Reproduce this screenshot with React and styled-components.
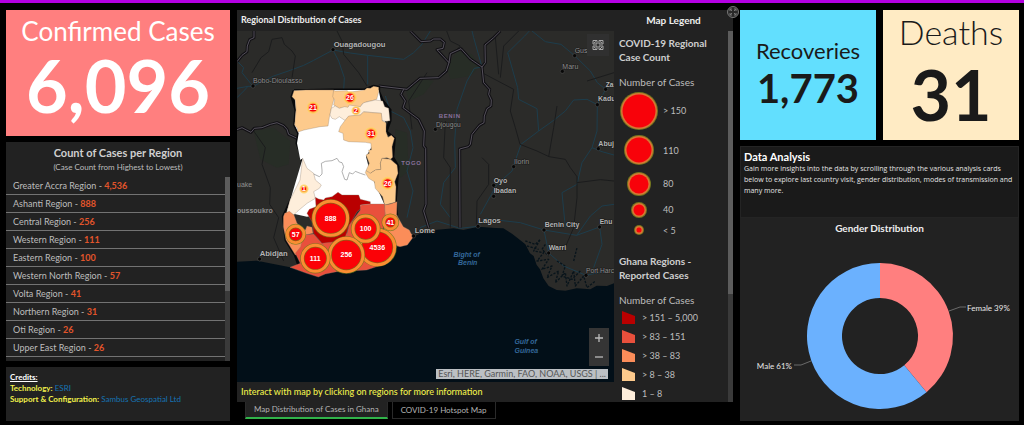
import React from "react";
import styled, { createGlobalStyle } from "styled-components";

const GlobalStyle = createGlobalStyle`
  * { box-sizing: border-box; }
  body { margin: 0; background: #000; color: #bdbdbd; font-family: Lato, "Open Sans", sans-serif; font-size: 10px; }
  h1, h2, h3, p, ul, dl, dd { margin: 0; padding: 0; }
  button { font: inherit; color: inherit; padding: 0; }
`;

const Page = styled.div`
  min-height: 100vh;
  display: flex;
  flex-direction: column;
  border-top: 3px solid #b400e2;
`;

const Dashboard = styled.main`
  flex: 1;
  display: grid;
  grid-template-columns: minmax(0, 224fr) minmax(0, 496fr) minmax(0, 279fr);
  gap: 7px;
  padding: 7px 5px 4px 6px;
`;

const Column = styled.div`
  display: flex;
  flex-direction: column;
  gap: ${(p) => p.$gap || 0}px;
`;

const StatCard = styled.section`
  min-height: ${(p) => p.$height}px;
  flex: ${(p) => (p.$share ? "1" : "none")};
  display: flex;
  flex-direction: column;
  align-items: center;
  padding-top: ${(p) => p.$top}px;
  background: ${(p) => p.$bg};
  color: ${(p) => p.$color};
`;

const StatName = styled.h2`
  font-size: ${(p) => p.$size}px;
  line-height: ${(p) => p.$line}px;
  font-weight: ${(p) => p.$weight || 400};
`;

const StatValue = styled.p`
  font-size: ${(p) => p.$size}px;
  line-height: ${(p) => p.$line}px;
  font-weight: 700;
`;

const StatPair = styled.div`
  display: flex;
  gap: 7px;
`;

const Panel = styled.section`
  background: #222;
  flex: 1;
  display: flex;
  flex-direction: column;
  min-height: 0;
`;

const ListHeading = styled.header`
  text-align: center;
  height: 35px;
  padding-top: 4px;
`;

const ListTitle = styled.h2`
  font-size: 11px;
  line-height: 14px;
  color: #cfcfcf;
`;

const ListNote = styled.p`
  font-size: 8px;
  line-height: 14px;
`;

const ScrollArea = styled.div`
  flex: 1;
  display: flex;
  min-height: 0;
`;

const ScrollTrack = styled.div`
  width: 5px;
  flex: none;
  background: #3a3a3a;
`;

const ScrollThumb = styled.div`
  height: ${(p) => p.$size}%;
  background: #5c5c5c;
`;

const RegionList = styled.ul`
  flex: 1;
  list-style: none;
`;

const RegionRow = styled.li`
  height: 18px;
  padding-left: 7px;
  line-height: 17px;
  border-bottom: 1px solid #737373;
  font-size: 9px;
  strong { color: #e2552b; }
`;

const Credits = styled.section`
  height: 54px;
  padding: 5px 4px;
  background: #222;
  font-size: 8px;
  line-height: 11px;
  color: #f1f14b;
  h2 { font-size: 8px; line-height: 11px; color: #fff; text-decoration: underline; }
  a { color: #1673b3; text-decoration: none; }
`;

const MapPanel = styled.section`
  position: relative;
  background: #222;
  display: grid;
  grid-template-columns: minmax(0, 377fr) minmax(0, 119fr);
  grid-template-rows: 21px auto;
`;

const PanelTitle = styled.h2`
  font-size: ${(p) => p.$size}px;
  line-height: 20px;
  font-weight: 700;
  padding: 0 4px;
  text-align: ${(p) => p.$align || "left"};
  color: #eee;
`;

const ExpandButton = styled.button`
  position: absolute;
  top: -4px;
  right: -6px;
  width: 12px;
  height: 12px;
  border: 0;
  background: none;
  svg { display: block; }
`;

const MapFrame = styled.div`
  position: relative;
  overflow: hidden;
  > svg { display: block; width: 100%; height: auto; }
`;

const MapTool = styled.button`
  position: absolute;
  top: 3px;
  right: 5px;
  width: 22px;
  height: 22px;
  border: 0;
  background: #303030;
  display: grid;
  place-items: center;
`;

const ZoomControl = styled.div`
  position: absolute;
  right: 5px;
  bottom: 16px;
  width: 20px;
  display: flex;
  flex-direction: column;
  background: #353535;
`;

const ZoomButton = styled.button`
  height: 19px;
  border: 0;
  background: none;
  display: grid;
  place-items: center;
`;

const Attribution = styled.p`
  position: absolute;
  right: 6px;
  bottom: 3px;
  height: 10px;
  padding: 0 2px;
  font-size: 9px;
  line-height: 10px;
  white-space: nowrap;
  background: #bcc0c4;
  color: #555;
`;

const Caption = styled.p`
  height: 20px;
  padding-left: 4px;
  line-height: 20px;
  font-size: 9px;
  font-weight: 500;
  color: #f0f04c;
`;

const LegendColumn = styled.aside`
  display: flex;
  height: 0;
  min-height: 100%;
  overflow: hidden;
`;

const LegendBody = styled.div`
  flex: 1;
  padding: 5px 0 0 5px;
`;

const LegendTitle = styled.h3`
  font-size: 10px;
  line-height: 14px;
  color: #cfcfcf;
  margin-bottom: 11px;
`;

const LegendSubtitle = styled.p`
  font-size: 10px;
  line-height: 14px;
  margin-bottom: 1px;
`;

const LegendList = styled.ul`
  list-style: none;
  margin-bottom: ${(p) => p.$after || 0}px;
`;

const LegendItem = styled.li`
  display: grid;
  grid-template-columns: ${(p) => p.$col}px 1fr;
  column-gap: ${(p) => p.$gap}px;
  align-items: center;
  height: ${(p) => p.$height}px;
  padding-left: ${(p) => p.$indent || 0}px;
  font-size: 9px;
  svg { display: block; margin: auto; }
`;

const TabBar = styled.div`
  display: flex;
  gap: 4px;
  padding-left: 8px;
`;

const Tab = styled.button`
  height: 17px;
  padding: 0 8px;
  font-size: 8px;
  line-height: 15px;
  color: #b4b4b4;
  border: 1px solid #2a2a2a;
  border-top: 0;
  border-bottom: ${(p) => (p.$active ? "2px solid #31b34a" : "1px solid #2a2a2a")};
  background: ${(p) => (p.$active ? "#222" : "#000")};
`;

const AnalysisGroup = styled.div`
  flex: 1;
  display: flex;
  flex-direction: column;
  margin-top: 6px;
`;

const Analysis = styled.section`
  min-height: 72px;
  padding: 4px 0 0 3px;
  background: #1a1a1a;
  color: #e4e4e4;
  border: 1px solid #242424;
  h2 { font-size: 11px; line-height: 12px; color: #fff; }
  p { font-family: "Open Sans", sans-serif; font-size: 7px; line-height: 11px; }
`;

const ChartTitle = styled.h2`
  text-align: center;
  font-size: 10px;
  line-height: 20px;
  color: #eee;
`;

const ChartArea = styled.div`
  flex: 1;
  svg { display: block; width: 100%; height: auto; }
`;

const regions = [
  ["Greater Accra Region", "4,536"],
  ["Ashanti Region", "888"],
  ["Central Region", "256"],
  ["Western Region", "111"],
  ["Eastern Region", "100"],
  ["Western North Region", "57"],
  ["Volta Region", "41"],
  ["Northern Region", "31"],
  ["Oti Region", "26"],
  ["Upper East Region", "26"],
];

// Circle legend: [label, radius, row height]
const bubbleLegend = [
  ["> 150", 19, 41],
  ["110", 15, 38],
  ["80", 12, 29],
  ["40", 8, 23],
  ["< 5", 5, 18],
];

const shadeLegend = [
  ["> 151 – 5,000", "#b90000"],
  ["> 83 – 151", "#e9503c"],
  ["> 38 – 83", "#fb8d59"],
  ["> 8 – 38", "#fdca8c"],
  ["1 – 8", "#feeedb"],
];

// Region shapes of Ghana: [fill, points]
const shapes = [
  ["#fff", "186,272 300,270 440,270 460,370 402,470 415,520 458,615 385,620 225,650 164,637 212,475 205,480 195,430 200,400 188,375 192,330"],
  ["#fdca8c", "186,272 222,270 305,270 308,290 298,325 292,352 288,378 264,380 240,385 216,390 198,396 196,385 188,375 192,330 190,300 180,290"],
  ["#fdca8c", "305,270 308,273 346,272 350,277 398,270 405,264 415,265 425,259 440,262 440,275 434,298 420,302 405,305 390,312 385,322 352,318 345,330 338,322 322,325 305,315 308,300 302,290"],
  ["#feeedb", "298,325 310,318 322,325 338,320 348,322 352,315 385,320 395,308 430,300 452,303 458,320 470,325 474,362 462,364 450,362 448,340 395,335 385,345 350,350 340,362 322,350 310,358 300,355 294,345"],
  ["#fdca8c", "340,360 350,348 385,345 395,336 448,340 450,362 462,368 462,395 468,412 478,406 487,415 480,440 482,472 475,478 465,473 450,475 445,490 447,508 430,510 415,520 402,512 412,490 402,465 412,460 410,450 418,450 417,430 400,427 350,425 335,420 333,400 320,395 325,380"],
  ["#fdca8c", "400,518 402,512 415,520 430,510 447,508 445,490 450,475 475,478 495,495 498,520 488,545 492,560 490,607 458,615 452,590 430,565 427,545 410,535"],
  ["#feeedb", "212,475 225,505 245,520 250,540 268,555 262,565 245,575 250,595 225,610 195,635 185,645 164,637 174,600 189,570 204,540"],
  ["#fb8d59", "154,650 158,640 172,634 186,645 195,670 220,690 225,678 240,682 243,700 220,705 208,750 190,765 162,720 154,680"],
  ["#e9503c", "213,705 245,702 275,735 314,815 280,822 259,831 224,820 174,802 205,790 190,760 206,740"],
  ["#e9503c", "345,700 489,735 464,790 404,810 314,815 270,730"],
  ["#b90000", "250,592 260,597 275,600 280,594 300,590 318,577 330,585 380,585 385,598 415,605 415,612 385,615 388,625 375,635 350,680 340,710 310,725 270,730 245,700 240,665 225,640 232,628 252,620"],
  ["#e9503c", "385,616 415,612 458,612 460,640 455,680 440,720 400,740 360,740 345,700 352,675 385,630"],
  ["#fb8d59", "458,615 475,612 495,605 494,645 514,680 532,690 538,702 546,708 526,735 504,740 489,735 455,690 460,650"],
];

// Case bubbles: [x, y, radius, label]
const bubbles = [
  [243, 323, 15, "21"],
  [354, 293, 16, "26"],
  [372, 332, 10, "2"],
  [417, 401, 16, "31"],
  [467, 550, 16, "26"],
  [216, 567, 10, "1"],
  [436, 742, 52, "4536"],
  [296, 655, 51, "888"],
  [401, 686, 38, "100"],
  [343, 765, 50, "256"],
  [250, 775, 39, "111"],
  [191, 703, 25, "57"],
  [475, 667, 20, "41"],
];

// Cities: [x, y, name, dx, dy, weight, size]
const cities = [
  [288, 56, "Ouagadougou", 2, -9, 700, 23],
  [48, 165, "Bobo-Dioulasso", 0, -8, 400, 21],
  [595, 295, "Djougou", 2, -6, 400, 20],
  [1013, 74, "Gus", 0, -8, 400, 21],
  [976, 121, "Maru", 0, -8, 400, 21],
  [1106, 175, "Za", 0, -8, 700, 20],
  [1081, 221, "Kadu", 2, -10, 700, 21],
  [1084, 353, "Abuj", 0, -8, 700, 21],
  [830, 407, "Ilorin", 1, -8, 400, 21],
  [770, 463, "Oyo", 0, -8, 700, 21],
  [770, 496, "Ibadan", 0, -9, 700, 21],
  [723, 586, "Lagos", 1, -9, 700, 23],
  [921, 597, "Benin City", 2, -9, 700, 21],
  [935, 666, "Warri", 0, -8, 700, 21],
  [1088, 588, "Enu", 0, -8, 700, 20],
  [1047, 733, "Port Harc", 0, -8, 400, 20],
  [68, 684, "Abidjan", 0, -9, 700, 23],
  [530, 615, "Lome", 3, -8, 700, 23],
];

const borders = [
  "M51 0 V20 L38 26 31 45 30 62 15 73 0 92",
  "M0 296 15 290 30 298 42 304 52 292 75 290 100 280 120 275 140 284 150 295 155 310 172 318 185 325",
  "M520 0 L552 32 580 30 590 24 610 24 622 34 618 52 600 56 636 95 628 120 605 140 549 142 530 158 510 175 450 168 425 165",
  "M636 95 640 68 672 53 700 84 735 108 745 95 744 42 770 20 790 0",
  "M735 108 740 155 758 175 755 190 763 207 762 225 750 233 742 255 741 275 727 283 705 310 700 340 694 347 668 354 669 590",
  "M500 175 492 190 505 210 498 230 518 245 545 265 562 300 560 345 566 352 567 520 560 540 575 590",
];

const thinBorders = [
  "M45 125 72 80 95 62 105 25 135 20 142 40 165 60 175 75 165 140",
  "M300 0 315 30 320 70 365 125 390 165",
  "M50 300 85 350 75 400 100 470 98 520 125 560 110 620 140 690",
  "M629 0 640 30 670 45 655 60 M525 295 515 210 570 125",
  "M735 125 830 175 820 240 835 290 849 340 900 360 936 377 985 385 1000 410 1020 437 1020 500 1010 590 980 660",
  "M960 225 950 290 935 377 M1131 125 1050 150 M845 0 800 45 790 140 M1131 450 1090 446 1020 455",
  "M735 380 755 400 755 460 720 510 718 585 M625 270 620 380 640 410 640 590 M775 20 785 130",
];

const rivers = [
  "M0 172 33 166 48 166 110 135 160 118 200 103 230 88 288 57 305 90 322 140 320 178",
  "M0 90 20 110 15 125 48 166 M0 200 20 180 33 166",
  "M288 57 340 66 392 73 392 160 M392 73 500 85 530 65 555 40 580 0",
  "M705 0 710 20 735 108 712 112 690 150 660 235 653 330 655 410 620 455 610 520 640 560",
  "M877 0 863 15 812 65 842 170 845 205 900 233 905 300 852 340 837 383 825 420 780 460 730 550",
  "M885 0 925 32 972 40 1013 74 1060 120 1081 155 1106 175 1131 160 M1081 221 1050 205 1010 207 985 240 950 268 905 300",
  "M1106 175 1081 221 1080 300 1065 350 1035 395 1020 460 975 485 985 590",
  "M445 195 460 240 500 260 520 300 528 350 510 420 528 480 510 560",
  "M723 586 745 563 850 575 921 597 1019 613 1088 588 1095 640 1070 710 M921 597 935 666 980 705 1047 733 1131 715",
  "M1065 350 1095 362 1131 372 M1019 613 1060 555 1095 525 1131 520 M549 590 600 570 669 592 723 586",
];

function RegionalMap() {
  return (
    <svg viewBox="0 0 1131 1053" role="img" aria-label="Map of cases by region in Ghana" fontFamily="'Liberation Sans', Arial, sans-serif">
      <rect width="1131" height="1053" fill="#020f18" />
      <path
        fill="#2b2b29"
        d="M0 0H1131V757L1110 765 1079 764 1060 775 1019 772 985 779 959 777 935 765 919 742 909 715 899 702 890 675 879 667 865 640 849 627 825 608 799 592 775 591 724 587 679 597 650 592 594 597 560 602 530 617 510 640 474 650 240 720 175 712 125 702 60 689 0 692Z"
      />
      <g fill="#272d26">
        <path d="M665 60 705 70 730 105 700 135 640 145 630 110 650 75Z" />
        <path d="M50 300 110 290 160 330 155 400 120 410 70 385Z" />
        <path d="M505 170 560 145 590 150 560 190 515 210Z" />
        <path d="M475 295 510 305 515 420 490 440 475 380Z" />
      </g>
      <g fill="none" strokeLinejoin="round">
        <g stroke="#1d3d4c" strokeWidth="3">
          {rivers.map((d) => <path key={d} d={d} />)}
        </g>
        <g stroke="#1b1c1d" strokeWidth="3">
          {thinBorders.map((d) => <path key={d} d={d} />)}
        </g>
        <g stroke="#111014" strokeWidth="9">
          {borders.map((d) => <path key={d} d={d} />)}
        </g>
        <g stroke="#77717f" strokeWidth="2">
          {borders.map((d) => <path key={d} d={d} />)}
        </g>
        <path
          d="M865 630 895 640 910 625 890 660 920 665 900 690 935 685 915 715 945 705 930 740 965 720 955 755 985 725 990 765 1010 720 1015 765 1040 735 1050 770 1075 750 M960 690 985 705 975 735 1005 745 1030 720 M925 640 915 655 935 675 M1010 690 1020 650 M870 645 905 655"
          stroke="#08141b"
          strokeWidth="4"
          strokeDasharray="7 4"
        />
      </g>
      <g transform="translate(-15 -93)">
        <path
          d="M186 272 300 270 398 270 425 259 440 262 440 275 452 303 474 330 474 362 462 395 487 415 482 472 498 500 490 600 494 645"
          fill="none"
          stroke="#08090b"
          strokeWidth="9"
        />
        <path d="M186 272 180 290 192 330 188 375 200 400 195 430 212 475 204 540 154 650 162 720 190 765 200 795" fill="none" stroke="#08090b" strokeWidth="9" />
        {shapes.map(([fill, points]) => (
          <polygon key={points} points={points} fill={fill} stroke="#8c7a66" strokeWidth={fill === "#fff" ? 0 : 1} />
        ))}
        <path
          d="M245 522 262 530 270 522 270 510 268 490 280 484 300 482 315 475 322 486 330 488 335 500 330 515 338 538 345 540 352 518 362 522 370 514 385 520 400 525"
          fill="none"
          stroke="#8a8a8a"
          strokeWidth="2"
        />
        {bubbles.map(([x, y, r, label]) => (
          <g key={`${x}-${y}`}>
            <circle cx={x} cy={y} r={r} fill="#fb0207" stroke={r > 16 ? "#6e7c1b" : "#ffd35a"} strokeWidth={r > 16 ? 13 : 7} strokeOpacity="0.8" />
            {r > 16 && <circle cx={x} cy={y} r={r} fill="none" stroke="#fb8d32" strokeWidth="9" />}
            <text x={x} y={y + 7} textAnchor="middle" fontSize="21" fontWeight="700" fill="#fff">{label}</text>
          </g>
        ))}
      </g>
      {cities.map(([x, y, name, dx, dy, weight, size]) => (
        <g key={name}>
          <circle cx={x} cy={y} r="6" fill="#070707" stroke="#6d6d6d" strokeWidth="1" />
          <text x={x + dx} y={y + dy} fontSize={size} fontWeight={weight} fill={weight === 700 ? "#b4b4b4" : "#8f8f8f"} stroke="#1b1b1b" strokeWidth="3" paintOrder="stroke">
            {name}
          </text>
        </g>
      ))}
      <g fontSize="21" fill="#8f8f8f">
        <text x="0" y="467">uake</text>
        <text x="0" y="545" fontWeight="700">oussoukro</text>
      </g>
      <g fontSize="18" fontWeight="700" fill="#88719a" letterSpacing="2">
        <text x="493" y="401">TOGO</text>
        <text x="605" y="260">BENIN</text>
      </g>
      <g fontSize="21" fontWeight="700" fontStyle="italic" fill="#34689a" textAnchor="middle">
        <text x="689" y="678">Bight of</text>
        <text x="692" y="701">Benin</text>
        <text x="866" y="939">Gulf of</text>
        <text x="868" y="965">Guinea</text>
      </g>
    </svg>
  );
}

function polar(angle, radius) {
  const a = (angle * Math.PI) / 180;
  return `${140 + radius * Math.sin(a)} ${98 - radius * Math.cos(a)}`;
}

function slice(from, to) {
  const large = to - from > 180 ? 1 : 0;
  return `M${polar(from, 73)}A73 73 0 ${large} 1 ${polar(to, 73)}L${polar(to, 38)}A38 38 0 ${large} 0 ${polar(from, 38)}Z`;
}

function GenderChart() {
  const split = 360 * 0.39;
  return (
    <svg viewBox="0 0 279 183" role="img" aria-label="Female 39%, Male 61%">
      <path d={slice(0, split)} fill="#ff7f7f" />
      <path d={slice(split, 360)} fill="#6bb1fe" />
      <g fill="none" stroke="#6a6a6a" strokeWidth="1">
        <path d="M209 73 220 69H226" />
        <path d="M71 123 61 127H54" />
      </g>
      <g fill="#e6e6e6" fontSize="8">
        <text x="227" y="73">Female 39%</text>
        <text x="52" y="131" textAnchor="end">Male 61%</text>
      </g>
    </svg>
  );
}

function Bubble({ radius }) {
  const side = radius * 2 + 2;
  return (
    <svg width={side} height={side} viewBox={`${-side / 2} ${-side / 2} ${side} ${side}`} aria-hidden="true">
      <circle r={radius} fill="#74761f" />
      <circle r={radius - 1} fill="#d87535" />
      <circle r={radius - 2.5} fill="#f8020a" />
    </svg>
  );
}

export default function App() {
  return (
    <>
      <GlobalStyle />
      <Page>
        <Dashboard>
          <Column $gap={6}>
            <StatCard $height={126} $top={5} $bg="#ff7f7f" $color="#fff">
              <StatName $size={26} $line={32}>Confirmed Cases</StatName>
              <StatValue $size={72} $line={76}>6,096</StatValue>
            </StatCard>
            <Panel>
              <ListHeading>
                <ListTitle>Count of Cases per Region</ListTitle>
                <ListNote>(Case Count from Highest to Lowest)</ListNote>
              </ListHeading>
              <ScrollArea>
                <RegionList>
                  {regions.map(([name, count]) => (
                    <RegionRow key={name}>{name} - <strong>{count}</strong></RegionRow>
                  ))}
                </RegionList>
                <ScrollTrack><ScrollThumb $size={62} /></ScrollTrack>
              </ScrollArea>
            </Panel>
            <Credits>
              <h2>Credits:</h2>
              <p><strong>Technology:</strong> <a href="#esri">ESRI</a></p>
              <p><strong>Support &amp; Configuration:</strong> <a href="#sambus">Sambus Geospatial Ltd</a></p>
            </Credits>
          </Column>

          <Column>
            <MapPanel>
              <PanelTitle $size={9}>Regional Distribution of Cases</PanelTitle>
              <PanelTitle $size={10} $align="center">Map Legend</PanelTitle>
              <div>
                <MapFrame>
                  <RegionalMap />
                  <MapTool aria-label="Basemap gallery">
                    <svg width="12" height="12" viewBox="0 0 12 12" fill="none" stroke="#a8a8a8">
                      <path d="M1 1.5h4v3.500h-4zM7 1.500h4v3.500h-4zM1 7h4v3.500h-4zM7 7h4v3.500h-4zM2 4l2-1.500M8 2.500l2 1.500M2 8l2 1.500M8 10l2-2" />
                    </svg>
                  </MapTool>
                  <ZoomControl>
                    <ZoomButton aria-label="Zoom in">
                      <svg width="10" height="10" viewBox="0 0 10 10" stroke="#bbb" strokeWidth="1.300"><path d="M1 5h8M5 1v8" /></svg>
                    </ZoomButton>
                    <ZoomButton aria-label="Zoom out">
                      <svg width="10" height="10" viewBox="0 0 10 10" stroke="#bbb" strokeWidth="1.300"><path d="M1 5h8" /></svg>
                    </ZoomButton>
                  </ZoomControl>
                  <Attribution>Esri, HERE, Garmin, FAO, NOAA, USGS | ...</Attribution>
                </MapFrame>
                <Caption>Interact with map by clicking on regions for more information</Caption>
              </div>
              <LegendColumn>
                <LegendBody>
                  <LegendTitle>COVID-19 Regional<br />Case Count</LegendTitle>
                  <LegendSubtitle>Number of Cases</LegendSubtitle>
                  <LegendList $after={15}>
                    {bubbleLegend.map(([label, radius, height]) => (
                      <LegendItem key={label} $col={40} $gap={4} $height={height}>
                        <Bubble radius={radius} />
                        <span>{label}</span>
                      </LegendItem>
                    ))}
                  </LegendList>
                  <LegendTitle>Ghana Regions -<br />Reported Cases</LegendTitle>
                  <LegendSubtitle>Number of Cases</LegendSubtitle>
                  <LegendList>
                    {shadeLegend.map(([label, color]) => (
                      <LegendItem key={label} $col={13} $gap={7} $height={19} $indent={3}>
                        <svg width="13" height="13" viewBox="0 0 13 13" aria-hidden="true">
                          <path d="M0 0 13 5V13H0Z" fill={color} />
                        </svg>
                        <span>{label}</span>
                      </LegendItem>
                    ))}
                  </LegendList>
                </LegendBody>
                <ScrollTrack><ScrollThumb $size={71} /></ScrollTrack>
              </LegendColumn>
              <ExpandButton aria-label="Expand map">
                <svg width="12" height="12" viewBox="0 0 12 12" fill="none" stroke="#777">
                  <circle cx="6" cy="6" r="5.500" fill="#2a2a2a" />
                  <path d="M3 5V3h2M7 3h2v2M9 7v2H7M5 9H3V7M3 3l2 2M9 3 7 5M9 9 7 7M3 9l2-2" />
                </svg>
              </ExpandButton>
            </MapPanel>
            <TabBar role="tablist">
              <Tab role="tab" aria-selected="true" $active>Map Distribution of Cases in Ghana</Tab>
              <Tab role="tab" aria-selected="false">COVID-19 Hotspot Map</Tab>
            </TabBar>
          </Column>

          <Column>
            <StatPair>
              <StatCard $share $height={130} $top={26} $bg="#62dffe" $color="#1a1a1a">
                <StatName $size={22} $line={30}>Recoveries</StatName>
                <StatValue $size={40} $line={44}>1,773</StatValue>
              </StatCard>
              <StatCard $share $height={130} $top={2} $bg="#ffebc4" $color="#1a1a1a">
                <StatName $size={34} $line={40} $weight={300}>Deaths</StatName>
                <StatValue $size={70} $line={84}>31</StatValue>
              </StatCard>
            </StatPair>
            <AnalysisGroup>
              <Analysis>
                <h2>Data Analysis</h2>
                <p>Gain more insights into the data by scrolling through the various analysis cards below to explore last country visit, gender distribution, modes of transmission and many more.</p>
              </Analysis>
              <Panel>
                <ChartTitle>Gender Distribution</ChartTitle>
                <ChartArea><GenderChart /></ChartArea>
              </Panel>
            </AnalysisGroup>
          </Column>
        </Dashboard>
      </Page>
    </>
  );
}
